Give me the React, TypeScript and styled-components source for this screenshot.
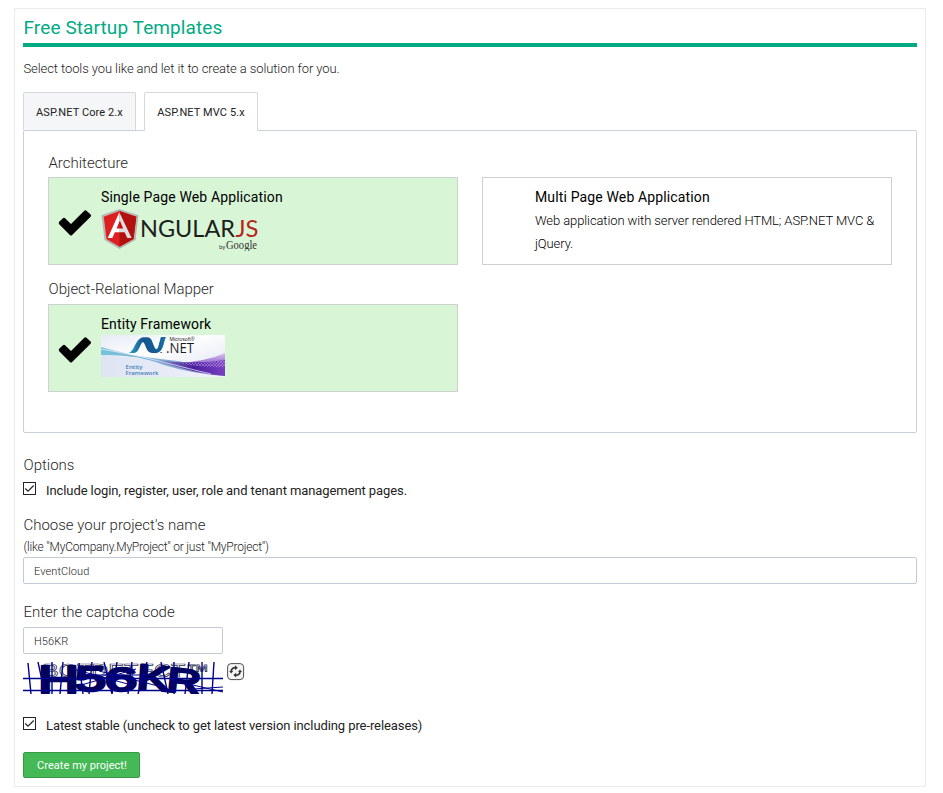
import React, { useState } from "react";
import styled, { createGlobalStyle } from "styled-components";

const GlobalStyle = createGlobalStyle`
  * { box-sizing: border-box; }
  body {
    margin: 0;
    background: #fff;
    color: #222;
    font-family: Roboto, "Liberation Sans", sans-serif;
    font-size: 13px;
  }
`;

const Card = styled.main`
  width: 912px;
  height: 779px;
  margin: 8px 0 0 14px;
  padding: 0 8px;
  border: 1px solid #ebebeb;
`;

const Title = styled.h1`
  margin: 0;
  height: 38px;
  padding: 2px 0 0 0.5px;
  border-bottom: 4px solid #00ab84;
  color: #00ab84;
  font-size: 19px;
  font-weight: 400;
  line-height: 34px;
  letter-spacing: 0.1px;
`;

const Intro = styled.p`
  margin: 12px 0 13px;
  padding-left: 0.5px;
  font-weight: 300;
  line-height: 20px;
  letter-spacing: -0.09px;
`;

const Tabs = styled.div`
  display: flex;
  gap: 8px;
  height: 38px;
`;

const Tab = styled.button<{ $active?: boolean; $width: number }>`
  width: ${(p) => p.$width}px;
  height: ${(p) => (p.$active ? 39 : 38)}px;
  padding: ${(p) => (p.$active ? 1 : 2)}px 0 0;
  z-index: 1;
  border: 1px solid #d5d9de;
  border-bottom: 0;
  border-radius: 2px 2px 0 0;
  background: ${(p) => (p.$active ? "#fff" : "#f5f6f8")};
  color: #222;
  font: 400 11px Roboto, sans-serif;
  letter-spacing: 0.1px;
`;

const Panel = styled.section`
  height: 303px;
  padding: 21px 24px 0;
  border: 1px solid #c9d2da;
  border-radius: 2px;
`;

const Heading = styled.h2<{ $top?: number; $bottom?: number }>`
  margin: ${(p) => p.$top ?? 0}px 0 ${(p) => p.$bottom ?? 0}px;
  padding-left: 0.5px;
  color: #282828;
  font-size: 15px;
  font-weight: 300;
  line-height: 22px;
  letter-spacing: -0.01px;
`;

const OptionGrid = styled.div`
  display: grid;
  grid-template-columns: 410px 410px;
  column-gap: 24px;
`;

const Option = styled.div<{ $selected?: boolean }>`
  display: grid;
  grid-template-columns: 52px 1fr;
  height: 88px;
  padding-top: 9px;
  border: 1px solid #cdd1cf;
  background: ${(p) => (p.$selected ? "#d8f5d6" : "#fff")};
`;

const CheckSlot = styled.div`
  padding: 22px 0 0 9px;
`;

const OptionName = styled.div`
  color: #000;
  font-size: 14px;
  line-height: 20px;
  letter-spacing: 0.14px;
`;

const OptionText = styled.p`
  margin: 2px 0 0;
  color: #000;
  font-weight: 300;
  line-height: 23px;
  letter-spacing: -0.1px;
`;

const Art = styled.svg`
  display: block;
  flex: none;
`;

const OptionArt = styled.div<{ $top?: number }>`
  padding-top: ${(p) => p.$top ?? 0}px;
`;

const CheckRow = styled.label<{ $top: number }>`
  display: flex;
  align-items: center;
  gap: 10px;
  height: 20px;
  margin-top: ${(p) => p.$top}px;
  color: #222;
  font-weight: 400;
  letter-spacing: -0.09px;
`;

const CheckBox = styled.svg`
  display: block;
  margin-bottom: 3px;
`;

const Hint = styled.div`
  height: 20px;
  margin-top: 1px;
  padding-left: 0.5px;
  font-size: 12px;
  font-weight: 300;
  line-height: 20px;
  letter-spacing: -0.22px;
`;

const Field = styled.input<{ $width: string }>`
  display: block;
  width: ${(p) => p.$width};
  height: 27px;
  padding: 1px 10px 0;
  border: 1px solid #c2cad8;
  border-radius: 2px;
  outline: 0;
  color: #222;
  font: 300 11px Roboto, sans-serif;
  letter-spacing: 0.08px;
`;

const CaptchaRow = styled.div`
  display: flex;
  gap: 4px;
  margin-top: 8px;
`;

const IconButton = styled.button`
  width: 18px;
  height: 18px;
  margin-top: 1px;
  padding: 0;
  border: 0;
  background: none;
`;

const Submit = styled.button`
  display: block;
  width: 117px;
  height: 26px;
  margin-top: 17px;
  padding: 0 0 0 1px;
  border: 1px solid #389a49;
  border-radius: 2px;
  background: #44b955;
  color: #fff;
  font: 400 11px Roboto, sans-serif;
  letter-spacing: 0.04px;
`;

function BigCheck() {
  return (
    <Art width="34" height="28" viewBox="0 0 34 28">
      <path
        d="M1.2 12.8 4.9 9.2Q6 8.2 7.1 9.2L13 15 26.3 1.7Q27.4.7 28.5 1.7L32.6 5.5Q33.6 6.6 32.6 7.7L14.1 26.1Q13 27.1 11.9 26.1L1.2 15.2Q.2 14 1.2 12.8Z"
        fill="#000"
      />
    </Art>
  );
}

function AngularLogo() {
  return (
    <Art width="160" height="44" viewBox="0 0 160 44" fontFamily="Lato, sans-serif">
      <path d="M18.5 2 37.5 8.3 34.5 33 18.5 42 3.5 33 0.5 8.3Z" fill="#b3b8b5" />
      <path d="M18.5 4 35.3 9.7 32.5 32 18.5 39.700 5.5 32 2.7 9.7Z" fill="#dd201f" />
      <path d="M18.5 4 35.3 9.7 32.5 32 18.5 39.700Z" fill="#b3110d" />
      <path d="M18.3 5.3 6.8 31H11.3L13.9 25.2H18.8V21.4H15.5L18.8 13.5Z" fill="#fff" />
      <path d="M18.3 5.3 30.6 31H26.3L23.6 25.2H18.8V21.4H22.1L18.8 13.5Z" fill="#dedede" />
      <text x="39" y="30" fontSize="22.5" fill="#1c211c" textLength="95" lengthAdjust="spacingAndGlyphs">NGULAR</text>
      <text x="134.5" y="30" fontSize="22.5" fill="#b5251e" textLength="23" lengthAdjust="spacingAndGlyphs">JS</text>
      <text x="118" y="42" fontSize="6" fill="#333">by</text>
      <text x="125" y="42" fontSize="11.5" fill="#333" fontFamily="Liberation Serif, serif" textLength="31" lengthAdjust="spacingAndGlyphs">Google</text>
    </Art>
  );
}

function EntityLogo() {
  return (
    <Art width="124" height="42" viewBox="0 0 124 42">
      <defs>
        <linearGradient id="sky" x2="1" y2="1">
          <stop stopColor="#e6eaf6" />
          <stop offset=".4" stopColor="#fff" />
          <stop offset="1" stopColor="#dfe3f2" />
        </linearGradient>
        <linearGradient id="base">
          <stop stopColor="#dde4f3" />
          <stop offset="1" stopColor="#f2f2fa" />
        </linearGradient>
        <linearGradient id="violet">
          <stop stopColor="#8796ca" />
          <stop offset=".55" stopColor="#4b1f9c" />
          <stop offset="1" stopColor="#7a3fc0" />
        </linearGradient>
        <linearGradient id="glow" x2="0" y2="1">
          <stop stopColor="#dcc9f0" />
          <stop offset="1" stopColor="#8a5bc9" />
        </linearGradient>
        <linearGradient id="aqua">
          <stop stopColor="#78c2db" />
          <stop offset="1" stopColor="#8c94cc" />
        </linearGradient>
        <linearGradient id="ribbon">
          <stop stopColor="#27a5cb" />
          <stop offset=".4" stopColor="#16508a" />
          <stop offset=".75" stopColor="#126495" />
          <stop offset="1" stopColor="#39b2d8" />
        </linearGradient>
        <pattern id="mesh" width="3" height="3" patternUnits="userSpaceOnUse">
          <path d="M0 0 3 3M3 0 0 3" stroke="#c3a4ea" strokeWidth=".5" />
        </pattern>
      </defs>
      <rect width="124" height="42" fill="url(#sky)" />
      <path d="M0 20Q29 20 74 30L124 41V42H0Z" fill="url(#base)" />
      <path d="M78 28Q106 26 124 18V30Q98 31 78 28Z" fill="url(#glow)" />
      <path d="M0 12Q31 21 59 24T104 31L124 41Q92 39 63 30 36 19 0 20Z" fill="url(#aqua)" />
      <path d="M54 25Q92 30 124 25V41Q91 38 54 25Z" fill="url(#violet)" />
      <path d="M78 27.5Q104 29 124 25V32Q98 33 78 27.5Z" fill="url(#mesh)" />
      <path d="M0 14Q35 20 62 27T110 39" fill="none" stroke="#f2f8ff" strokeWidth=".7" />
      <path d="M28 18C34 15 34 5 41 2.500H47C51 3 51 7 53 11 55 16 57 15 58 9L60 2H65C62 8 63 17 55 18H51C45 18 45 9 42 7 39 8 38 18 33 18Z" fill="url(#ribbon)" />
      <path d="M41 2.500H47C51 4 51 8 52.500 11 54 16 57 15 58 10L60 2H64.500C62 9 62 17 54 18.200 46 18 46 6 41 2.500Z" fill="#145c94" opacity=".75" />
      <path d="M59.500 17.500H61" stroke="#555" strokeWidth="1" />
      <text x="68.5" y="6" fontSize="6" fill="#222" textLength="25" lengthAdjust="spacingAndGlyphs" fontFamily="Liberation Sans, sans-serif">Microsoft®</text>
      <text x="65" y="18" fontSize="15" fill="#171c25" textLength="28" lengthAdjust="spacingAndGlyphs" fontFamily="Open Sans, sans-serif">.NET</text>
      <g fill="#3f80b8" fontFamily="Open Sans, sans-serif" fontSize="6" fontWeight="600">
        <text x="24.5" y="33.5" textLength="17" lengthAdjust="spacingAndGlyphs">Entity</text>
        <text x="24.5" y="40" textLength="33" lengthAdjust="spacingAndGlyphs">Framework</text>
      </g>
    </Art>
  );
}

function Captcha() {
  return (
    <Art width="200" height="32" viewBox="0 0 200 32">
      <text x="20" y="15" fontSize="18" fontFamily="Liberation Sans, sans-serif" fill="#fff" stroke="#333355" strokeWidth=".7" textLength="166" lengthAdjust="spacingAndGlyphs">BOTDETECT™</text>
      <g fontFamily="Liberation Sans, sans-serif" fill="#00005c" stroke="#00005c" strokeWidth="2.6" strokeLinejoin="round">
        <text x="15" y="30.5" fontSize="38" textLength="41" lengthAdjust="spacingAndGlyphs">H</text>
        <text x="52" y="28.5" fontSize="35" textLength="31" lengthAdjust="spacingAndGlyphs">5</text>
        <text x="82" y="28.5" fontSize="33" textLength="32" lengthAdjust="spacingAndGlyphs">6</text>
        <text x="113" y="26.5" fontSize="35" textLength="33" lengthAdjust="spacingAndGlyphs" transform="rotate(5 113 26.5)">K</text>
        <text x="143" y="29" fontSize="34" textLength="34" lengthAdjust="spacingAndGlyphs" transform="rotate(6 143 29)">R</text>
      </g>
      <g fill="none" stroke="#00008c" strokeWidth="1.4">
        <path d="M0 16.5H200M0 28.5H200" />
        <path d="M5 1 8 32M15 0 22 32M29 0V32M40 0 37 32M56 1 60 32M69 0 66 32M81 0 89 32M94 0 89 32M109 0 105 32M124 0 115 32M138 0 145 32M151 0V32M166 0 162 32M179 0V32M191 0 189 32" />
        <path d="M50 7 112 24M55 24 113 7M76 9 143 26M148 18 200 30M62 13H132M170 27 200 25" strokeWidth="1" />
      </g>
    </Art>
  );
}

function RefreshIcon() {
  return (
    <Art width="18" height="18" viewBox="0 0 18 18">
      <rect x=".6" y=".6" width="16" height="16" rx="3.5" fill="#f4f4f4" stroke="#4e4e4e" />
      <path d="M4.2 8.500C4.2 6 6.1 4.500 8.500 4.700M13 8.500C13 11 11 12.600 8.700 12.200" fill="none" stroke="#333" strokeWidth="1.7" />
      <path d="M8 2.300 10.800 4.800 8 7.200ZM9.200 9.700 6.300 12.100 9.200 14.500ZM2.200 8H6.200L4.200 10.600ZM11 9.100H15L13 6.500Z" fill="#333" />
    </Art>
  );
}

function Checkbox({ label, top }: { label: string; top: number }) {
  const [checked, setChecked] = useState(true);
  return (
    <CheckRow $top={top} onClick={() => setChecked(!checked)}>
      <CheckBox width="13" height="13" viewBox="0 0 13 13" role="checkbox" aria-checked={checked}>
        <rect x=".5" y=".5" width="12" height="12" fill="#fff" stroke="#222" />
        {checked && <path d="M2.3 6.5 5 9.2 10.7 3.5" fill="none" stroke="#222" strokeWidth="1.1" />}
      </CheckBox>
      <span>{label}</span>
    </CheckRow>
  );
}

export default function App() {
  return (
    <>
      <GlobalStyle />
      <Card>
        <Title>Free Startup Templates</Title>
        <Intro>Select tools you like and let it to create a solution for you.</Intro>
        <Tabs>
          <Tab $width={113}>ASP.NET Core 2.x</Tab>
          <Tab $active $width={114}>ASP.NET MVC 5.x</Tab>
        </Tabs>
        <Panel>
          <Heading $bottom={3}>Architecture</Heading>
          <OptionGrid>
            <Option $selected>
              <CheckSlot><BigCheck /></CheckSlot>
              <div>
                <OptionName>Single Page Web Application</OptionName>
                <OptionArt><AngularLogo /></OptionArt>
              </div>
            </Option>
            <Option>
              <CheckSlot />
              <div>
                <OptionName>Multi Page Web Application</OptionName>
                <OptionText>Web application with server rendered HTML; ASP.NET MVC &amp; jQuery.</OptionText>
              </div>
            </Option>
          </OptionGrid>
          <Heading $top={13} $bottom={4}>Object-Relational Mapper</Heading>
          <OptionGrid>
            <Option $selected>
              <CheckSlot><BigCheck /></CheckSlot>
              <div>
                <OptionName>Entity Framework</OptionName>
                <OptionArt $top={1}><EntityLogo /></OptionArt>
              </div>
            </Option>
          </OptionGrid>
        </Panel>
        <Heading $top={21}>Options</Heading>
        <Checkbox label="Include login, register, user, role and tenant management pages." top={4} />
        <Heading $top={14}>Choose your project's name</Heading>
        <Hint>(like "MyCompany.MyProject" or just "MyProject")</Hint>
        <Field $width="100%" defaultValue="EventCloud" />
        <Heading $top={17} $bottom={4}>Enter the captcha code</Heading>
        <Field $width="200px" defaultValue="H56KR" />
        <CaptchaRow>
          <Captcha />
          <IconButton aria-label="Refresh"><RefreshIcon /></IconButton>
        </CaptchaRow>
        <Checkbox label="Latest stable (uncheck to get latest version including pre-releases)" top={21} />
        <Submit>Create my project!</Submit>
      </Card>
    </>
  );
}
